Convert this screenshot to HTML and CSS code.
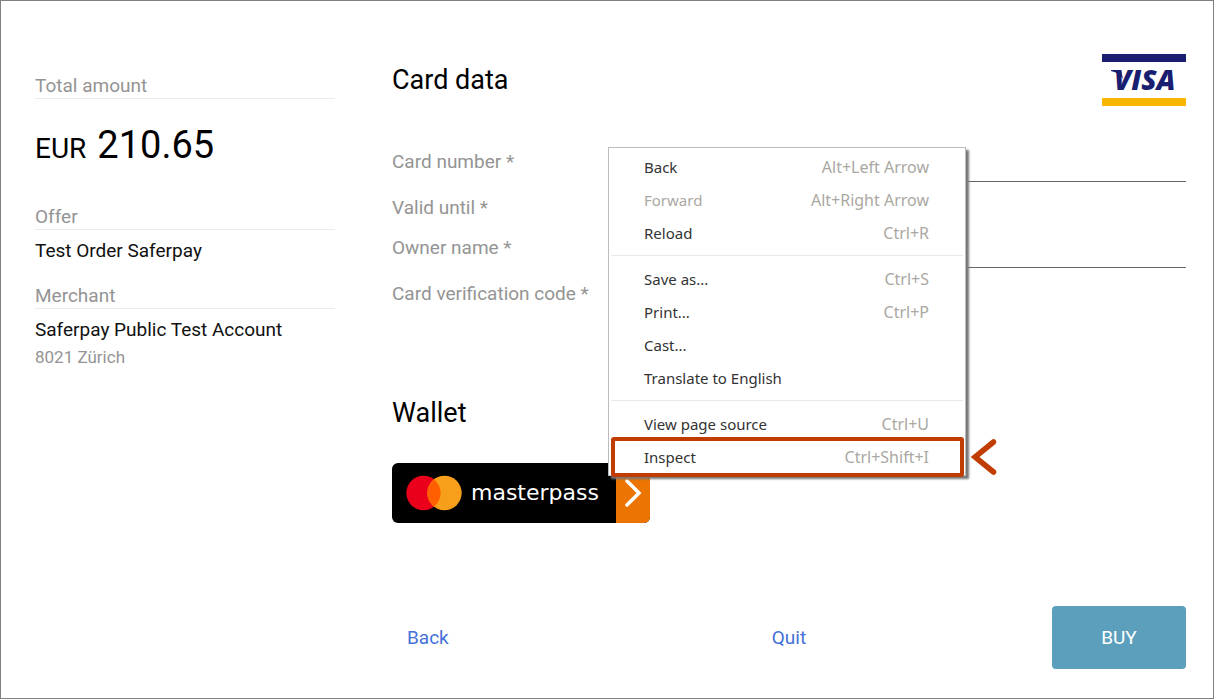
FILE: index.html
```html
<!DOCTYPE html>
<html lang="en">
<head>
<meta charset="utf-8">
<meta name="viewport" content="width=device-width, initial-scale=1">
<title>Card data</title>
<link rel="stylesheet" href="styles.css">
</head>
<body>
<div class="page">
  <aside class="summary">
    <section class="summary-block summary-total">
      <h2 class="summary-label">Total amount</h2>
      <p class="amount">EUR <span class="amount-value">210.65</span></p>
    </section>
    <section class="summary-block">
      <h2 class="summary-label">Offer</h2>
      <p class="summary-text">Test Order Saferpay</p>
    </section>
    <section class="summary-block">
      <h2 class="summary-label">Merchant</h2>
      <p class="summary-text">Saferpay Public Test Account</p>
      <p class="summary-note">8021 Zürich</p>
    </section>
  </aside>

  <main class="payment">
    <header class="payment-header">
      <h1 class="heading">Card data</h1>
      <svg class="visa" viewBox="0 0 84 52" role="img" aria-label="Visa">
        <rect width="84" height="8" fill="#191e70"/>
        <rect y="44" width="84" height="8" fill="#f9b500"/>
        <path d="M9 16h10l2 9q-3-6-12-8z" fill="#191e70"/>
        <text class="visa-text" x="12" y="36">VISA</text>
      </svg>
    </header>

    <form class="fields">
      <div class="field">
        <label for="number">Card number *</label>
        <input class="field-input" id="number" type="text">
      </div>
      <div class="field field-short">
        <label for="valid">Valid until *</label>
        <input class="field-input" id="valid" type="text">
      </div>
      <div class="field">
        <label for="owner">Owner name *</label>
        <input class="field-input" id="owner" type="text">
      </div>
      <div class="field field-short">
        <label for="code">Card verification code *</label>
        <input class="field-input" id="code" type="text">
      </div>
    </form>

    <section class="wallet">
      <h2 class="heading">Wallet</h2>
      <button class="masterpass" type="button">
        <span class="masterpass-brand">
          <svg class="masterpass-logo" viewBox="0 0 56 36" aria-hidden="true">
            <circle cx="17.500" cy="18" r="17.200" fill="#eb001b"/>
            <circle cx="38.500" cy="18" r="17.200" fill="#f79e1b"/>
            <path d="M28 4.400a17.200 17.200 0 0 1 0 27.200a17.200 17.200 0 0 1 0-27.200z" fill="#ff5f00"/>
          </svg>
          masterpass
        </span>
        <span class="masterpass-go">
          <svg class="masterpass-arrow" viewBox="0 0 18 28" aria-hidden="true">
            <path d="M3 2l12 12L3 26" fill="none" stroke="#fff" stroke-width="3.500" stroke-linecap="round"/>
          </svg>
        </span>
      </button>
    </section>

    <footer class="actions">
      <a class="action-link action-back" href="#back">Back</a>
      <a class="action-link" href="#quit">Quit</a>
      <button class="buy" type="button">BUY</button>
    </footer>
  </main>

  <div class="menu" role="menu">
    <button class="menu-item" role="menuitem" type="button">Back <span class="keys">Alt+Left Arrow</span></button>
    <button class="menu-item" role="menuitem" type="button" disabled>Forward <span class="keys">Alt+Right Arrow</span></button>
    <button class="menu-item" role="menuitem" type="button">Reload <span class="keys">Ctrl+R</span></button>
    <hr class="menu-line">
    <button class="menu-item" role="menuitem" type="button">Save as... <span class="keys">Ctrl+S</span></button>
    <button class="menu-item" role="menuitem" type="button">Print... <span class="keys">Ctrl+P</span></button>
    <button class="menu-item" role="menuitem" type="button">Cast...</button>
    <button class="menu-item" role="menuitem" type="button">Translate to English</button>
    <hr class="menu-line">
    <button class="menu-item" role="menuitem" type="button">View page source <span class="keys">Ctrl+U</span></button>
    <button class="menu-item menu-item-marked" role="menuitem" type="button">Inspect <span class="keys">Ctrl+Shift+I</span></button>
    <svg class="pointer" viewBox="0 0 26 36" aria-hidden="true">
      <path d="M22.500 3L4 18L22.500 33" fill="none" stroke="#c13c00" stroke-width="5.500" stroke-linecap="round"/>
    </svg>
  </div>
</div>
</body>
</html>
```
FILE: styles.css
```css
* {
  box-sizing: border-box;
}

body {
  margin: 0;
  background: #fff;
  color: #111;
  font: 19px/24px Roboto, sans-serif;
}

h1, h2, p {
  margin: 0;
  font-weight: 400;
}

button {
  border: 0;
  padding: 0;
  font: inherit;
}

.page {
  position: relative;
  display: grid;
  grid-template-columns: 300px 1fr;
  column-gap: 57px;
  min-height: 100vh;
  padding: 53px 27px 29px 34px;
  border: 1px solid #7f7f7f;
}

.summary {
  padding-top: 20px;
}

.summary-block {
  margin-bottom: 21px;
}

.summary-total {
  margin-bottom: 34px;
}

.summary-label {
  margin-bottom: 9px;
  border-bottom: 1px solid #ebebeb;
  color: #949494;
  font-size: 19px;
}

.amount {
  display: flex;
  align-items: baseline;
  gap: 11px;
  margin-top: 24px;
  color: #000;
  font-size: 28px;
  line-height: 44px;
}

.amount-value {
  font-size: 38px;
}

.summary-note {
  margin-top: 3px;
  color: #949494;
  font-size: 17px;
}

.payment {
  display: flex;
  flex-direction: column;
}

.payment-header {
  display: flex;
  align-items: center;
  justify-content: space-between;
}

.heading {
  color: #000;
  font-size: 27px;
  line-height: 36px;
}

.visa {
  width: 84px;
  height: 52px;
}

.visa-text {
  fill: #191e70;
  font: italic 800 28px "Open Sans", sans-serif;
}

.fields {
  margin-top: 36px;
}

.field {
  display: grid;
  grid-template-columns: 220px 1fr;
  align-items: center;
  color: #949494;
}

.field-short {
  grid-template-columns: 220px 120px;
  margin-top: 6px;
}

.field-input {
  min-width: 0;
  height: 40px;
  border: 0;
  border-bottom: 1px solid #666;
  background: transparent;
  font: inherit;
}

.wallet {
  margin-top: 81px;
}

.masterpass {
  display: flex;
  width: 258px;
  height: 60px;
  margin-top: 32px;
  overflow: hidden;
  border-radius: 6px;
  background: #000;
  color: #fff;
  font: 22px/24px "DejaVu Sans", sans-serif;
}

.masterpass-brand {
  display: flex;
  flex: 1;
  align-items: center;
  gap: 9px;
  padding-left: 14px;
}

.masterpass-logo {
  width: 56px;
  height: 36px;
}

.masterpass-go {
  display: grid;
  place-items: center;
  align-self: stretch;
  width: 34px;
  background: #eb7500;
}

.masterpass-arrow {
  width: 18px;
  height: 28px;
}

.actions {
  display: grid;
  grid-template-columns: 1fr auto 1fr;
  align-items: center;
  margin-top: auto;
}

.action-link {
  color: #4571d8;
  text-decoration: none;
}

.action-back {
  padding-left: 15px;
}

.buy {
  justify-self: end;
  width: 134px;
  height: 63px;
  border-radius: 4px;
  background: #5b9fbc;
  color: #fff;
}

.menu {
  position: absolute;
  top: 146px;
  left: 607px;
  width: 358px;
  padding: 2px;
  border: 1px solid #bcbcbc;
  background: #fff;
  box-shadow: 3px 3px 2px #777;
  font: 15px/24px "Noto Sans", sans-serif;
}

.menu-item {
  position: relative;
  display: flex;
  align-items: center;
  justify-content: space-between;
  width: 100%;
  height: 33px;
  padding: 0 34px 0 33px;
  background: transparent;
  color: #333;
}

.menu-item:disabled,
.keys {
  color: #aaa8a2;
}

.keys {
  font-size: 16px;
}

.menu-line {
  height: 1px;
  margin: 6px 0;
  border: 0;
  background: #e9e9e9;
}

.menu-item-marked::after {
  content: "";
  position: absolute;
  inset: -3px -1px -4px 0;
  border: 4px solid #c13c00;
  border-radius: 3px;
}

.pointer {
  position: absolute;
  right: -32px;
  bottom: 0;
  width: 26px;
  height: 36px;
}
```
